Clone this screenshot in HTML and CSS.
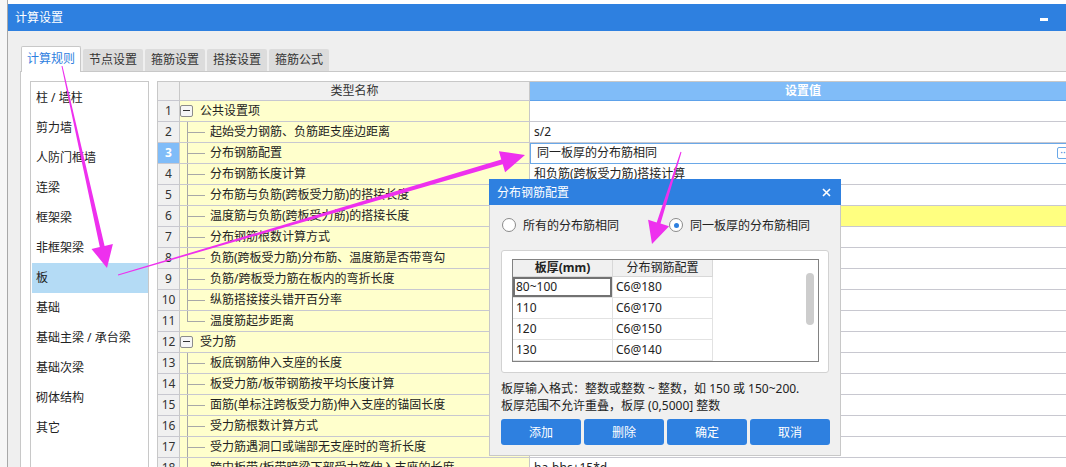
FILE: index.html
```html
<!DOCTYPE html>
<html>
<head>
<meta charset="utf-8">
<link rel="stylesheet" href="styles.css">
</head>
<body>
<div class="screen">
  <div class="strip"></div>
  <div class="window">
    <div class="titlebar"><span class="title">计算设置</span><span class="minimize"></span></div>
    <div class="win-body">
      <div class="tabs">
        <div class="tab active">计算规则</div>
        <div class="tab">节点设置</div>
        <div class="tab">箍筋设置</div>
        <div class="tab">搭接设置</div>
        <div class="tab">箍筋公式</div>
      </div>
      <div class="pane">
        <ul class="cat-list">
          <li>柱 / 墙柱</li>
          <li>剪力墙</li>
          <li>人防门框墙</li>
          <li>连梁</li>
          <li>框架梁</li>
          <li>非框架梁</li>
          <li class="selected">板</li>
          <li>基础</li>
          <li>基础主梁 / 承台梁</li>
          <li>基础次梁</li>
          <li>砌体结构</li>
          <li>其它</li>
        </ul>
        <div class="grid">
          <div class="row head">
            <div class="num"></div>
            <div class="name">类型名称</div>
            <div class="val">设置值</div>
          </div>
          <div class="row"><div class="num">1</div><div class="name"><span class="toggle"></span><span class="gtext">公共设置项</span></div><div class="val"></div></div>
          <div class="row"><div class="num">2</div><div class="name"><span class="branch"></span>起始受力钢筋、负筋距支座边距离</div><div class="val">s/2</div></div>
          <div class="row"><div class="num cur">3</div><div class="name"><span class="branch"></span>分布钢筋配置</div><div class="val edit"><span>同一板厚的分布筋相同</span><span class="more">··</span></div></div>
          <div class="row"><div class="num">4</div><div class="name"><span class="branch"></span>分布钢筋长度计算</div><div class="val">和负筋(跨板受力筋)搭接计算</div></div>
          <div class="row"><div class="num">5</div><div class="name"><span class="branch"></span>分布筋与负筋(跨板受力筋)的搭接长度</div><div class="val"></div></div>
          <div class="row"><div class="num">6</div><div class="name"><span class="branch"></span>温度筋与负筋(跨板受力筋)的搭接长度</div><div class="val mark"></div></div>
          <div class="row"><div class="num">7</div><div class="name"><span class="branch"></span>分布钢筋根数计算方式</div><div class="val"></div></div>
          <div class="row"><div class="num">8</div><div class="name"><span class="branch"></span>负筋(跨板受力筋)分布筋、温度筋是否带弯勾</div><div class="val"></div></div>
          <div class="row"><div class="num">9</div><div class="name"><span class="branch"></span>负筋/跨板受力筋在板内的弯折长度</div><div class="val"></div></div>
          <div class="row"><div class="num">10</div><div class="name"><span class="branch"></span>纵筋搭接接头错开百分率</div><div class="val"></div></div>
          <div class="row"><div class="num">11</div><div class="name"><span class="branch last"></span>温度筋起步距离</div><div class="val"></div></div>
          <div class="row"><div class="num">12</div><div class="name"><span class="toggle"></span><span class="gtext">受力筋</span></div><div class="val"></div></div>
          <div class="row"><div class="num">13</div><div class="name"><span class="branch"></span>板底钢筋伸入支座的长度</div><div class="val"></div></div>
          <div class="row"><div class="num">14</div><div class="name"><span class="branch"></span>板受力筋/板带钢筋按平均长度计算</div><div class="val"></div></div>
          <div class="row"><div class="num">15</div><div class="name"><span class="branch"></span>面筋(单标注跨板受力筋)伸入支座的锚固长度</div><div class="val"></div></div>
          <div class="row"><div class="num">16</div><div class="name"><span class="branch"></span>受力筋根数计算方式</div><div class="val"></div></div>
          <div class="row"><div class="num">17</div><div class="name"><span class="branch"></span>受力筋遇洞口或端部无支座时的弯折长度</div><div class="val"></div></div>
          <div class="row"><div class="num">18</div><div class="name"><span class="branch"></span>跨中板带/板带暗梁下部受力筋伸入支座的长度</div><div class="val">ha-bhc+15*d</div></div>
        </div>
      </div>
    </div>
  </div>
</div>

<div class="dialog">
  <div class="dlg-title">
    <span>分布钢筋配置</span>
    <svg class="close" width="9" height="9" viewBox="0 0 9 9"><path d="M1 1L8 8M8 1L1 8" stroke="#fff" stroke-width="1.6"/></svg>
  </div>
  <div class="dlg-body">
    <div class="radios">
      <label class="radio first"><span class="circle"></span>所有的分布筋相同</label>
      <label class="radio second"><span class="circle on"></span>同一板厚的分布筋相同</label>
    </div>
    <div class="groupbox">
      <div class="subgrid">
        <div class="subtable">
          <div class="srow shead"><div class="sc bold">板厚(mm)</div><div class="sc">分布钢筋配置</div></div>
          <div class="srow"><div class="sc sel">80~100</div><div class="sc">C6@180</div></div>
          <div class="srow"><div class="sc">110</div><div class="sc">C6@170</div></div>
          <div class="srow"><div class="sc">120</div><div class="sc">C6@150</div></div>
          <div class="srow"><div class="sc">130</div><div class="sc">C6@140</div></div>
        </div>
        <div class="thumb"></div>
      </div>
    </div>
    <p class="hint">板厚输入格式：整数或整数 ~ 整数，如 150 或 150~200.<br>板厚范围不允许重叠，板厚 (0,5000] 整数</p>
    <div class="buttons">
      <button>添加</button>
      <button>删除</button>
      <button>确定</button>
      <button>取消</button>
    </div>
  </div>
</div>

<svg class="arrows" width="1066" height="467" viewBox="0 0 1066 467">
  <polygon points="61.5,66 62.5,66 104.6,245.9 112.9,244.1 107,268 91.5,248.9 99.8,247"/>
  <polygon points="117.9,274.5 501.3,159.4 498.9,151.3 525,155 505.1,172.3 502.7,164.2 118.1,275.5"/>
  <polygon points="680.5,151.8 681.5,152.2 660.5,223.6 669.1,226.3 652,244 648.1,219.7 656.7,222.4"/>
</svg>
</body>
</html>
```

FILE: styles.css
```css
* { box-sizing: border-box; margin: 0; padding: 0; }

html, body {
  width: 1066px;
  height: 467px;
  overflow: hidden;
}

body {
  position: relative;
  background: #fff;
  font-family: "Noto Sans", "Noto Sans CJK SC", "Microsoft YaHei", sans-serif;
  font-size: 12px;
  color: #222;
}

.screen {
  display: flex;
  width: 1076px;
  height: 467px;
}

.strip {
  width: 8px;
  flex: none;
  background: #f6f6f6;
  border-right: 1px solid #a8a8a8;
}

.window {
  flex: 1;
  margin-top: 4px;
  display: flex;
  flex-direction: column;
  background: #efefef;
  min-width: 0;
}

.titlebar {
  height: 27px;
  flex: none;
  background: #2e80e0;
  color: #fff;
  display: flex;
  justify-content: space-between;
  align-items: center;
  padding: 0 28px 0 7px;
  line-height: 27px;
}

.minimize {
  align-self: flex-start;
  margin-top: 14px;
  width: 8px;
  height: 3px;
  background: #fff;
}

.win-body {
  flex: 1;
  display: flex;
  flex-direction: column;
  padding: 15px 0 0 12px;
  min-height: 0;
}

.tabs {
  display: flex;
  align-items: flex-end;
  height: 26px;
  flex: none;
  border-bottom: 1px solid #c8c8c8;
}

.tab {
  height: 22px;
  line-height: 22px;
  padding: 0 6px;
  margin-left: 2px;
  background: #dcdcdc;
  color: #333;
  border-radius: 2px 2px 0 0;
}

.tab.active {
  height: 26px;
  line-height: 24px;
  margin-left: 1px;
  margin-bottom: -1px;
  padding: 0 5px;
  background: #fff;
  color: #2e80e0;
  border: 1px solid #c8c8c8;
  border-bottom: none;
}

.pane {
  flex: 1;
  display: flex;
  align-items: flex-start;
  background: #fff;
  border-left: 1px solid #c8c8c8;
  padding: 9px 0 0 9px;
  min-height: 0;
}

.cat-list {
  list-style: none;
  width: 119px;
  height: 420px;
  flex: none;
  border: 1px solid #c8c8c8;
  padding-top: 1px;
}

.cat-list li {
  height: 30px;
  line-height: 30px;
  margin-left: 1px;
  padding-left: 4px;
  color: #222;
}

.cat-list li.selected {
  background: #b4dbf5;
}

.grid {
  flex: 1;
  margin-left: 8px;
  border-left: 1px solid #c8c8c8;
  border-top: 1px solid #c8c8c8;
}

.row {
  display: flex;
  height: 21px;
}

.row > div {
  height: 21px;
  line-height: 20px;
  border-bottom: 1px solid #c8c8d0;
  white-space: nowrap;
  overflow: hidden;
}

.num {
  width: 22px;
  flex: none;
  text-align: center;
  background: #f0f0f0;
  border-right: 1px solid #c8c8c8;
  color: #333;
}

.num.cur {
  background: #80bcf8;
  color: #fff;
  font-weight: bold;
}

.name {
  width: 350px;
  flex: none;
  background: #ffffcc;
  border-right: 1px solid #c8c8c8;
  display: flex;
  align-items: center;
}

.val {
  flex: 1;
  padding-left: 4px;
  background: #fff;
}

.val.mark {
  background: #ffff80;
}

.val.edit {
  display: flex;
  align-items: center;
  padding-left: 7px;
  border-bottom-color: #6aa8e8 !important;
  box-shadow: inset 1px 1px 0 #6aa8e8;
}

.more {
  margin-left: auto;
  margin-right: 7px;
  width: 12px;
  height: 12px;
  border: 1px solid #6aa8e8;
  border-radius: 2px;
  line-height: 8px;
  font-size: 10px;
  color: #4a8ad8;
  text-align: center;
}

.row.head,
.row.head > div {
  height: 19px;
  line-height: 18px;
}

.row.head .name {
  background: #f0f0f0;
  justify-content: center;
  color: #333;
}

.row.head .val {
  background: #80bcf8;
  color: #fff;
  font-weight: bold;
  text-align: center;
  padding-left: 0;
  border-bottom-color: #5ea2ea;
}

.toggle {
  position: relative;
  width: 13px;
  height: 12px;
  flex: none;
  border: 1px solid #8c8c8c;
  border-radius: 2px;
  background: #f6f6f6;
}

.toggle::after {
  content: "";
  position: absolute;
  left: 2px;
  top: 4px;
  width: 7px;
  height: 1px;
  background: #333;
}

.gtext {
  margin-left: 7px;
}

.branch {
  position: relative;
  width: 30px;
  height: 100%;
  flex: none;
  align-self: stretch;
}

.branch::before {
  content: "";
  position: absolute;
  left: 7px;
  top: 0;
  bottom: 0;
  width: 1px;
  background: #a8a8a8;
}

.branch.last::before {
  bottom: 50%;
}

.branch::after {
  content: "";
  position: absolute;
  left: 7px;
  top: 50%;
  width: 18px;
  height: 1px;
  background: #a8a8a8;
}

/* dialog */
.dialog {
  position: absolute;
  left: 489px;
  top: 179px;
  width: 352px;
  display: flex;
  flex-direction: column;
}

.dlg-title {
  height: 26px;
  background: #2e80e0;
  color: #fff;
  display: flex;
  align-items: center;
  justify-content: space-between;
  padding: 0 10px 0 8px;
}

.dlg-body {
  background: #f0f0f0;
  border: 1px solid #c8c8c8;
  border-top: none;
  padding: 0 10px 10px 11px;
}

.radios {
  display: flex;
  align-items: center;
  height: 14px;
  margin-top: 13px;
}

.radio {
  display: flex;
  align-items: center;
  gap: 7px;
  color: #222;
}

.radio.first { margin-left: 1px; }
.radio.second { margin-left: 50px; }

.circle {
  position: relative;
  width: 14px;
  height: 14px;
  border: 1px solid #8a8a8a;
  border-radius: 50%;
  background: #fff;
}

.circle.on::after {
  content: "";
  position: absolute;
  left: 3.5px;
  top: 3.5px;
  width: 5px;
  height: 5px;
  border-radius: 50%;
  background: #2e80e0;
}

.groupbox {
  margin-top: 18px;
  width: 328px;
  height: 123px;
  border: 1px solid #d2d2d2;
  border-radius: 3px;
  background: #fff;
  padding: 8px 0 0 10px;
}

.subgrid {
  width: 307px;
  height: 103px;
  border: 1px solid #828282;
  display: flex;
  overflow: hidden;
  background: #fff;
}

.subtable {
  width: 200px;
  flex: none;
}

.srow {
  display: flex;
  height: 21px;
}

.sc {
  width: 100px;
  height: 21px;
  line-height: 20px;
  padding-left: 3px;
  border-right: 1px solid #e2e2e2;
  border-bottom: 1px solid #e2e2e2;
  color: #222;
}

.srow.shead {
  height: 17px;
}

.srow.shead .sc {
  height: 17px;
  line-height: 16px;
  background: #f0f0f0;
  text-align: center;
  padding-left: 0;
  border-right-color: #d8d8d8;
  border-bottom-color: #d8d8d8;
}

.sc.bold { font-weight: bold; }

.sc.sel {
  box-shadow: inset 0 0 0 2px #727272;
}

.thumb {
  margin-left: auto;
  margin-right: 4px;
  margin-top: 13px;
  width: 8px;
  height: 52px;
  border-radius: 4px;
  background: #cdcdcd;
}

.hint {
  margin-top: 7px;
  line-height: 17px;
  color: #222;
  white-space: nowrap;
}

.buttons {
  display: flex;
  gap: 3px;
  margin-top: 5px;
}

.buttons button {
  width: 80px;
  height: 26px;
  border: none;
  border-radius: 3px;
  background: #2e80e0;
  color: #fff;
  font-family: inherit;
  font-size: 12px;
}

.arrows {
  position: absolute;
  left: 0;
  top: 0;
  pointer-events: none;
}

.arrows polygon {
  fill: #ee30ee;
}
```
